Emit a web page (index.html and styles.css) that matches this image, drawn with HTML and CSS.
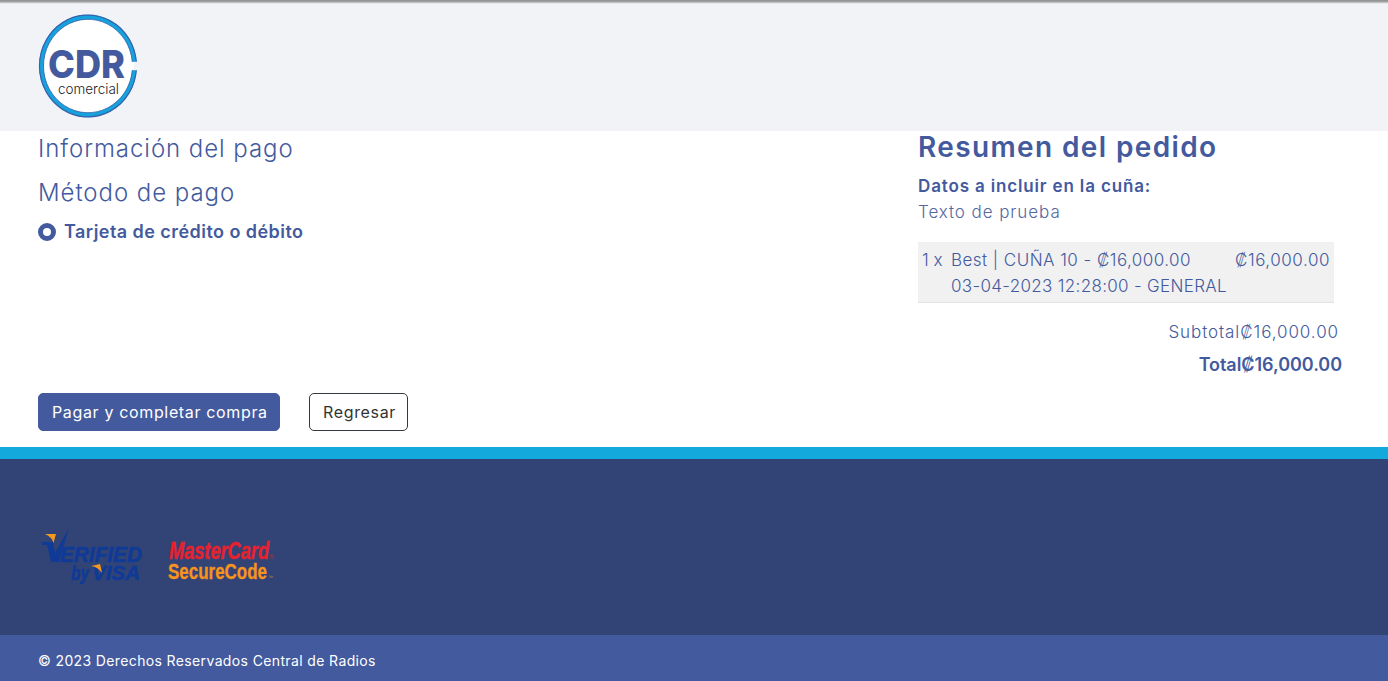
FILE: index.html
```html
<!DOCTYPE html>
<html lang="es">
<head>
<meta charset="utf-8">
<title>Información del pago</title>
<link rel="stylesheet" href="styles.css">
</head>
<body>
<header class="top">
  <svg class="logo" width="104" height="104" viewBox="0 0 104 104">
    <g transform="translate(52 52) scale(1 1.05) translate(-52 -52)">
      <circle cx="52" cy="52" r="46" fill="#fff"/>
      <path d="M98.4 48 A46.6 46.6 0 1 0 98.4 56" fill="none" stroke="#14a3dc" stroke-width="4.4"/>
      <path d="M100.3 48 A48.5 48.5 0 1 0 100.3 56" fill="none" stroke="#3a62ad" stroke-width="1.2"/>
      <path d="M96.3 48 A44.5 44.5 0 1 0 96.3 56" fill="none" stroke="#3a62ad" stroke-width="0.8"/>
    </g>
    <text class="logo-cdr" x="12" y="64" textLength="77" lengthAdjust="spacingAndGlyphs">CDR</text>
    <text class="logo-sub" x="22" y="80" textLength="61" lengthAdjust="spacingAndGlyphs">comercial</text>
  </svg>
</header>
<main class="content">
  <section class="pay">
    <h2 class="pay-title">Información del pago</h2>
    <h2 class="pay-title method">Método de pago</h2>
    <label class="radio-row"><span class="radio"></span>Tarjeta de crédito o débito</label>
  </section>
  <section class="summary">
    <h1 class="summary-title">Resumen del pedido</h1>
    <p class="data-label">Datos a incluir en la cuña:</p>
    <p class="data-text">Texto de prueba</p>
    <div class="item">
      <span class="qty">1 x</span>
      <span class="desc"><span class="line-a">Best | CUÑA 10 - ₡16,000.00</span><span class="line-b">03-04-2023 12:28:00 - GENERAL</span></span>
      <span class="price">₡16,000.00</span>
    </div>
    <p class="subtotal">Subtotal₡16,000.00</p>
    <p class="total">Total₡16,000.00</p>
  </section>
</main>
<div class="actions">
  <button class="btn primary">Pagar y completar compra</button>
  <button class="btn ghost">Regresar</button>
</div>
<div class="band"></div>
<footer class="foot">
  <svg class="cards" width="280" height="64" viewBox="0 0 280 64">
    <path d="M1 16 H12 L14 27 L28 2 L18 36 H10 L6 19 H1 Z" fill="#0f3a96"/>
    <path d="M4 8 H15 L12.5 17 Q11 11 4 8 Z" fill="#f39a1e"/>
    <text class="visa1" x="19" y="36" textLength="82" lengthAdjust="spacingAndGlyphs">ERIFIED</text>
    <text class="visa2" x="30" y="54" textLength="18" lengthAdjust="spacingAndGlyphs">by</text>
    <text class="visa2" x="51" y="54" textLength="48" lengthAdjust="spacingAndGlyphs">VISA</text>
    <path d="M50 40 Q55 39 59 38 L61 47 Q57 41 50 40 Z" fill="#f39a1e"/>
    <text class="mc1" x="128" y="33" textLength="100" lengthAdjust="spacingAndGlyphs">MasterCard</text>
    <text class="mc-mark" x="228" y="33">®</text>
    <text class="mc2" x="127" y="53" textLength="99" lengthAdjust="spacingAndGlyphs">SecureCode</text>
    <text class="mc-tm" x="227" y="53">™</text>
  </svg>
</footer>
<div class="copy">© 2023 Derechos Reservados Central de Radios</div>
</body>
</html>
```
FILE: styles.css
```css
* { box-sizing: border-box; }
html, body { margin: 0; padding: 0; }
body {
  font-family: Inter, "Open Sans", "Liberation Sans", sans-serif;
  color: #435a9e;
  background: #fff;
  height: 681px;
  overflow: hidden;
}
h1, h2, p { margin: 0; font-weight: 400; }

.top {
  height: 131px;
  padding: 14px 0 0 36px;
  background: linear-gradient(#8f8f8f, #a5a5a5 2px, #dcdde0 3px, #f2f3f7 4px);
}
.logo { display: block; }
.logo-cdr { font: 800 38.5px Inter, sans-serif; fill: #435a9e; }
.logo-sub { font: 300 14px Inter, sans-serif; fill: #1c1c1c; }

.content {
  display: grid;
  grid-template-columns: 880px 424px;
  padding-left: 38px;
  height: 262px;
}
.pay-title {
  font-size: 24px;
  font-weight: 350;
  line-height: 36px;
  letter-spacing: 0.95px;
}
.method { margin-top: 8px; }
.radio-row {
  display: flex;
  align-items: center;
  gap: 8px;
  font-size: 18px;
  font-weight: 600;
  line-height: 26px;
  margin-top: 8px;
  letter-spacing: 0.45px;
}
.radio {
  width: 18px;
  height: 18px;
  border-radius: 50%;
  border: 5px solid #435a9e;
  background: #fff;
}

.summary-title {
  font-size: 28px;
  font-weight: 600;
  line-height: 32px;
  letter-spacing: 1.38px;
}
.data-label {
  font-size: 17px;
  font-weight: 600;
  line-height: 24px;
  margin-top: 11px;
  letter-spacing: 0.85px;
}
.data-text {
  font-size: 17px;
  font-weight: 350;
  line-height: 24px;
  margin-top: 2px;
  color: #55689f;
  letter-spacing: 0.92px;
}
.item {
  display: flex;
  width: 416px;
  height: 61px;
  margin-top: 18px;
  padding: 5px 4px 0 4px;
  background: #f1f1f2;
  border-bottom: 1px solid #e1e2e6;
  font-size: 17px;
  font-weight: 350;
  line-height: 26px;
}
.qty { width: 29px; }
.desc { width: 284px; white-space: nowrap; }
.line-a { display: block; letter-spacing: 0.46px; }
.line-b { display: block; letter-spacing: 0.32px; }
.price { margin-left: auto; letter-spacing: 0.55px; }
.subtotal {
  width: 421px;
  text-align: right;
  font-size: 17px;
  font-weight: 350;
  line-height: 26px;
  margin-top: 16px;
  letter-spacing: 0.92px;
}
.total {
  width: 424px;
  text-align: right;
  font-size: 18px;
  font-weight: 600;
  line-height: 26px;
  margin-top: 7px;
  letter-spacing: -0.05px;
}

.actions {
  display: flex;
  gap: 29px;
  padding-left: 38px;
  height: 54px;
}
.btn {
  height: 38px;
  font-family: inherit;
  font-size: 16px;
  font-weight: 400;
  border-radius: 5px;
  padding: 0 13px;
  letter-spacing: 0.65px;
}
.primary { width: 242px; background: #435a9e; color: #fff; border: 1px solid #435a9e; white-space: nowrap; }
.ghost { width: 99px; background: #fff; color: #333; border: 1px solid #343a40; }

.band { height: 12px; background: #14a9dc; }
.foot {
  height: 176px;
  background: #324476;
  padding: 67px 0 0 41px;
}
.cards { display: block; }
.visa1 { font: italic 700 22.5px "Liberation Sans", sans-serif; fill: #0f3a96; stroke: #0f3a96; stroke-width: 0.6px; }
.visa2 { font: italic 700 19.5px "Liberation Sans", sans-serif; fill: #0f3a96; stroke: #0f3a96; stroke-width: 0.5px; }
.mc1 { font: italic 700 23px "Liberation Sans", sans-serif; fill: #e8212e; stroke: #e8212e; stroke-width: 0.4px; }
.mc2 { font: 700 22px "Liberation Sans", sans-serif; fill: #f7941d; stroke: #f7941d; stroke-width: 0.3px; }
.mc-mark { font: 700 6px "Liberation Sans", sans-serif; fill: #b5262e; }
.mc-tm { font: 400 5px "Liberation Sans", sans-serif; fill: #c9832d; }

.copy {
  height: 46px;
  background: #435a9e;
  color: #fff;
  padding-left: 38px;
  font-size: 14px;
  line-height: 52px;
  font-weight: 400;
  letter-spacing: 0.37px;
}
```
